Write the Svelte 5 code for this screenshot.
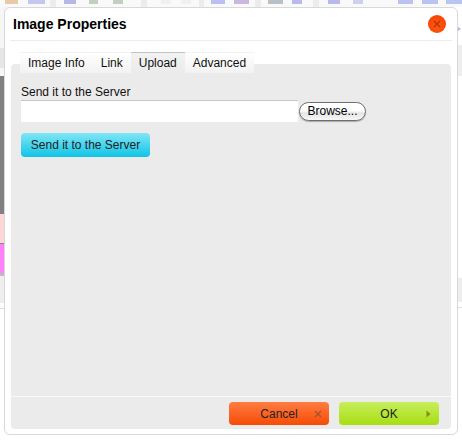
<script lang="ts">
  let activeTab = $state("Upload");
  const tabs = ["Image Info", "Link", "Upload", "Advanced"];

  // slivers of the editor toolbar that stay visible above the dialog
  // each icon: offset from the previous icon's end, width, colour
  const toolbarGroups = [
    { width: 50, icons: [[5, 13, "#e9c9a8"], [10, 17, "#c4c8ee"]] },
    { width: 85, icons: [[8, 12, "#b4b8e8"], [13, 9, "#c3d0c0"], [15, 10, "#c3d0c0"]] },
    { width: 52, icons: [[14, 10, "#f0f0f0"], [10, 10, "#f0f0f0"]] },
    { width: 51, icons: [[7, 14, "#bcc0f0"], [9, 15, "#c8b8e0"]] },
    { width: 52, icons: [[7, 15, "#b8c0c8"], [9, 10, "#b9b9f0"]] },
    { width: 143, icons: [[9, 12, "#b9b9f0"], [13, 10, "#cfcff0"], [35, 15, "#b9c4f0"], [9, 16, "#b9c4f0"], [8, 16, "#b9c4f0"]] },
  ];
</script>

<div class="page">
  <div class="toolbar">
    {#each toolbarGroups as group}
      <div class="tool-group" style="width: {group.width}px">
        {#each group.icons as [offset, width, color]}
          <span class="tool-icon" style="margin-left: {offset}px; width: {width}px; background: {color}"></span>
        {/each}
      </div>
    {/each}
  </div>

  <div class="backdrop">
    <div class="edge left">
      <div class="strip l-top"></div>
      <div class="strip l-box"></div>
      <div class="strip l-gap"></div>
      <div class="strip dark"></div>
      <div class="strip pink"></div>
      <div class="strip magenta"></div>
      <div class="strip pale"></div>
      <div class="strip rule"></div>
    </div>
    <div class="edge right">
      <div class="strip r-top"><span class="arrow"></span></div>
      <div class="strip r-box"></div>
      <div class="strip r-gap"></div>
      <div class="strip r-pale"></div>
      <div class="strip rule"></div>
    </div>
  </div>

  <div class="dialog">
    <header class="head">
      <h1>Image Properties</h1>
      <button class="close" type="button" aria-label="Close">
        <svg width="8" height="8" viewBox="0 0 8 8">
          <path d="M1 1l6 6M7 1l-6 6" stroke="#b5330a" stroke-width="1.4" fill="none" />
        </svg>
      </button>
    </header>

    <div class="body">
      <div class="tabs">
        {#each tabs as tab}
          <button
            type="button"
            class="tab"
            class:active={activeTab === tab}
            onclick={() => (activeTab = tab)}
          >{tab}</button>
        {/each}
      </div>

      <div class="panel">
        <div class="content">
          <label class="field-label" for="upload">Send it to the Server</label>
          <div class="file-row">
            <div class="file-input" id="upload"></div>
            <button type="button" class="browse">Browse...</button>
          </div>
          <button type="button" class="send">Send it to the Server</button>
        </div>

        <footer class="foot">
          <button type="button" class="action cancel">
            Cancel
            <svg class="mark" width="8" height="8" viewBox="0 0 8 8">
              <path d="M1 1l6 6M7 1l-6 6" stroke="#a8562c" stroke-width="1.5" fill="none" />
            </svg>
          </button>
          <button type="button" class="action ok">
            OK
            <svg class="mark" width="5" height="8" viewBox="0 0 5 8">
              <path d="M0.5 0.5L4.5 4L0.5 7.5z" fill="#7f8f1c" />
            </svg>
          </button>
        </footer>
      </div>
    </div>
  </div>
</div>

<style>
  :global(body) {
    margin: 0;
    background: #fff;
  }
  .page {
    position: relative;
    width: 462px;
    height: 442px;
    overflow: hidden;
    font-family: "Liberation Sans", Arial, sans-serif;
    color: #111;
  }
  .toolbar {
    display: flex;
    justify-content: space-between;
    height: 7px;
    background: #ececec;
  }
  .tool-group {
    display: flex;
    flex: none;
    height: 7px;
    background: #f9f9f9;
  }
  .tool-icon {
    flex: none;
    height: 4px;
  }
  .backdrop {
    position: absolute;
    inset: 0;
    top: 7px;
  }
  .edge {
    position: absolute;
    top: 0;
    width: 8px;
    display: flex;
    flex-direction: column;
  }
  .edge.left {
    left: 0;
  }
  .edge.right {
    right: 0;
    width: 5px;
  }
  .l-top {
    height: 41px;
    background: #f6f6f6;
  }
  .l-box {
    height: 20px;
    background: #e6e6e6;
  }
  .l-gap {
    height: 8px;
    background: #f6f6f6;
  }
  .dark {
    height: 138px;
    background: #808080;
  }
  .pink {
    height: 29px;
    background: #ffd6d6;
  }
  .magenta {
    height: 30px;
    background: #ff80f8;
    border-top: 1px solid #888;
    box-sizing: border-box;
  }
  .pale {
    height: 30px;
    background: #eeeeee;
    border-top: 3px solid #bbb;
    box-sizing: border-box;
  }
  .rule {
    height: 1px;
    margin-top: 5px;
    background: #ddd;
  }
  .r-top {
    height: 38px;
    padding-top: 19px;
    box-sizing: border-box;
    background: #fff;
  }
  .arrow {
    display: block;
    width: 0;
    height: 0;
    border-left: 4px solid #b9b9f0;
    border-top: 3px solid transparent;
    border-bottom: 3px solid transparent;
  }
  .r-box {
    height: 31px;
    background: #eeeeee;
  }
  .r-gap {
    height: 202px;
    background: #fff;
  }
  .r-pale {
    height: 24px;
    background: #eeeeee;
  }
  .dialog {
    position: absolute;
    left: 4px;
    top: 7px;
    width: 452px;
    height: 426px;
    display: flex;
    flex-direction: column;
    background: #fff;
    border: 1px solid #d8d8d8;
    border-radius: 6px;
  }
  .head {
    display: flex;
    align-items: center;
    justify-content: space-between;
    height: 32px;
    margin: 0 5px;
    padding: 0 6px 0 3px;
    border-bottom: 1px solid #ececec;
  }
  h1 {
    margin: 0;
    font-size: 14px;
    font-weight: bold;
    color: #000;
  }
  .close {
    display: flex;
    align-items: center;
    justify-content: center;
    width: 18px;
    height: 18px;
    padding: 0;
    border: none;
    border-radius: 50%;
    background: radial-gradient(circle at 50% 60%, #ff5a10, #f53c00);
  }
  .body {
    flex: 1;
    display: flex;
    flex-direction: column;
    min-height: 0;
    padding: 11px 6px 5px;
  }
  .tabs {
    display: flex;
    margin: 0 0 -9px 9px;
    position: relative;
    height: 21px;
  }
  .tab {
    height: 21px;
    padding: 0 8px;
    border: none;
    border-top: 1px solid transparent;
    background: linear-gradient(#fff, #f2f2f2);
    font: 12px "Liberation Sans", Arial, sans-serif;
    color: #111;
  }
  .tab.active {
    border-top-color: #c4c4c4;
    background: linear-gradient(#f2f2f2, #ebebeb);
  }
  .panel {
    flex: 1;
    display: flex;
    flex-direction: column;
    min-height: 0;
    background: #ebebeb;
    border-radius: 4px;
  }
  .content {
    flex: 1;
    display: flex;
    flex-direction: column;
    align-items: flex-start;
    padding: 21px 10px 0;
  }
  .field-label {
    font-size: 12px;
    line-height: 14px;
  }
  .file-row {
    display: flex;
    align-items: center;
    gap: 1px;
    margin-top: 1px;
  }
  .file-input {
    width: 277px;
    height: 21px;
    background: #fff;
    border-top: 1px solid #c8c8c8;
  }
  .browse {
    width: 67px;
    height: 19px;
    padding: 0;
    border: 1px solid #6e6e6e;
    border-radius: 10px;
    background: linear-gradient(#fff 45%, #e4e4e4 60%, #f8f8f8);
    box-shadow: 0 1px 1px #aaa;
    font: 12px "Liberation Sans", Arial, sans-serif;
    color: #000;
  }
  .send {
    width: 129px;
    height: 24px;
    margin-top: 11px;
    padding: 0;
    border: none;
    border-radius: 4px;
    background: linear-gradient(#80e6f6, #0fc4e6);
    font: 12px "Liberation Sans", Arial, sans-serif;
    color: #222;
  }
  .foot {
    display: flex;
    justify-content: flex-end;
    gap: 10px;
    height: 33px;
    padding: 5px 12px 0 0;
    box-sizing: border-box;
    border-top: 1px solid #f8f8f8;
  }
  .action {
    position: relative;
    width: 100px;
    height: 23px;
    padding: 0;
    border: none;
    border-radius: 4px;
    font: 12px "Liberation Sans", Arial, sans-serif;
    color: #222;
  }
  .cancel {
    background: linear-gradient(#ff7d42, #f64b05);
  }
  .ok {
    background: linear-gradient(#c6ee5c, #a8de12);
  }
  .mark {
    position: absolute;
    right: 7px;
    top: 8px;
  }
  .ok .mark {
    right: 8px;
  }
</style>
